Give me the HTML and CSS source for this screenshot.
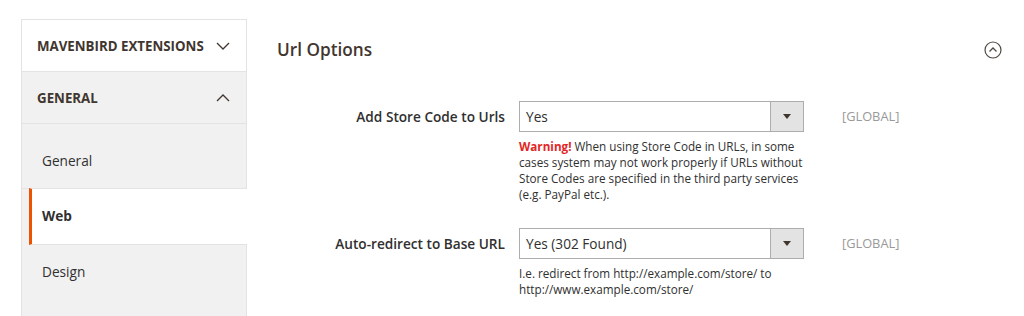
FILE: index.html
```html
<!DOCTYPE html>
<html>
<head>
<meta charset="utf-8">
<link rel="stylesheet" href="styles.css">
</head>
<body>
<div class="page">
  <aside class="sidebar">
    <div class="nav-title nav-title-top">
      <span>Mavenbird Extensions</span>
      <svg class="chev" width="14" height="8" viewBox="0 0 14 8"><path d="M1 1 L7 7 L13 1" fill="none" stroke="#41362f" stroke-width="1.3"/></svg>
    </div>
    <div class="nav-title nav-title-open">
      <span>General</span>
      <svg class="chev" width="14" height="8" viewBox="0 0 14 8"><path d="M1 7 L7 1 L13 7" fill="none" stroke="#41362f" stroke-width="1.3"/></svg>
    </div>
    <ul class="nav-items">
      <li class="nav-item first">General</li>
      <li class="nav-item active">Web</li>
      <li class="nav-item last">Design</li>
    </ul>
  </aside>
  <main class="main">
    <div class="section-head">
      <h2 class="section-title">Url Options</h2>
      <svg class="collapse" width="18" height="18" viewBox="0 0 18 18"><circle cx="9" cy="9" r="8" fill="none" stroke="#514943" stroke-width="1.2"/><path d="M5.5 10.5 L9 7 L12.5 10.5" fill="none" stroke="#514943" stroke-width="1.3"/></svg>
    </div>
    <div class="field">
      <label class="field-label">Add Store Code to Urls</label>
      <div class="field-control">
        <div class="select">
          <span class="select-value">Yes</span>
          <span class="select-btn"><span class="tri"></span></span>
        </div>
        <p class="note"><span class="warn">Warning!</span> When using Store Code in URLs, in some cases system may not work properly if URLs without Store Codes are specified in the third party services (e.g. PayPal etc.).</p>
      </div>
      <div class="scope">[GLOBAL]</div>
    </div>
    <div class="field">
      <label class="field-label">Auto-redirect to Base URL</label>
      <div class="field-control">
        <div class="select">
          <span class="select-value">Yes (302 Found)</span>
          <span class="select-btn"><span class="tri"></span></span>
        </div>
        <p class="note">I.e. redirect from http://example.com/store/ to http://www.example.com/store/</p>
      </div>
      <div class="scope">[GLOBAL]</div>
    </div>
  </main>
</div>
</body>
</html>
```

FILE: styles.css
```css
* { box-sizing: border-box; }
html, body { margin: 0; padding: 0; background: #fff; }
body {
  font-family: "Open Sans", "Liberation Sans", sans-serif;
  color: #303030;
  font-size: 13.65px;
  overflow: hidden;
}
.page {
  display: flex;
  padding: 19px 23px 0 21px;
  gap: 30px;
}
.sidebar {
  width: 226px;
  flex: 0 0 226px;
  border: 1px solid #e3e3e3;
  border-bottom: none;
  background: #f1f1f1;
}
.nav-title {
  display: flex;
  align-items: center;
  justify-content: space-between;
  height: 52px;
  padding: 0 16px 0 15px;
  border-bottom: 1px solid #e3e3e3;
  font-weight: 700;
  text-transform: uppercase;
  font-size: 13.3px;
  color: #41362f;
  white-space: nowrap;
}
.nav-title-top { background: #fff; }
.nav-title-open { background: #f1f1f1; }
.chev { display: block; }
.nav-items { list-style: none; margin: 0; padding: 0; }
.nav-item {
  display: block;
  padding-left: 20px;
  line-height: 20px;
  border-bottom: 1px solid #e3e3e3;
  color: #303030;
  font-size: 13.65px;
}
.nav-item.first { height: 65px; padding-top: 27px; }
.nav-item.active {
  background: #fff;
  margin-left: 7px;
  margin-right: -1px;
  border-left: 3px solid #eb5202;
  padding-left: 10px;
  padding-top: 17px;
  font-weight: 700;
  height: 57px;
  margin-top: -1px;
  border-top: 1px solid #e3e3e3;
}
.nav-item.last { height: 80px; padding-top: 17px; border-bottom: none; }
.main { flex: 1; padding-top: 19px; }
.section-head {
  display: flex;
  align-items: center;
  justify-content: space-between;
  height: 24px;
  margin-bottom: 39px;
}
.section-title {
  margin: 0;
  font-size: 17.2px;
  font-weight: 600;
  color: #41362f;
  line-height: 24px;
}
.collapse { display: block; margin-right: -1px; }
.field {
  display: flex;
  align-items: flex-start;
  margin-bottom: 26px;
}
.field-label {
  width: 228px;
  flex: 0 0 228px;
  text-align: right;
  line-height: 31px;
  font-weight: 600;
  font-size: 13.65px;
  color: #303030;
}
.field-control { width: 285px; margin-left: 14px; }
.select {
  display: flex;
  height: 31px;
  border: 1px solid #adadad;
  background: #fff;
}
.select-value {
  flex: 1;
  line-height: 29px;
  padding-left: 6px;
  font-size: 13.65px;
  color: #303030;
}
.select-btn {
  width: 33px;
  background: #e3e3e3;
  border-left: 1px solid #adadad;
  display: flex;
  align-items: center;
  justify-content: center;
}
.tri {
  width: 0; height: 0;
  border-left: 4px solid transparent;
  border-right: 4px solid transparent;
  border-top: 5px solid #41362f;
}
.note {
  margin: 6px 0 0;
  font-size: 11.7px;
  line-height: 16px;
  color: #303030;
}
.warn { color: #e22626; font-weight: 700; }
.scope {
  margin-left: 38px;
  line-height: 31px;
  font-size: 12.8px;
  color: #999;
}
```
